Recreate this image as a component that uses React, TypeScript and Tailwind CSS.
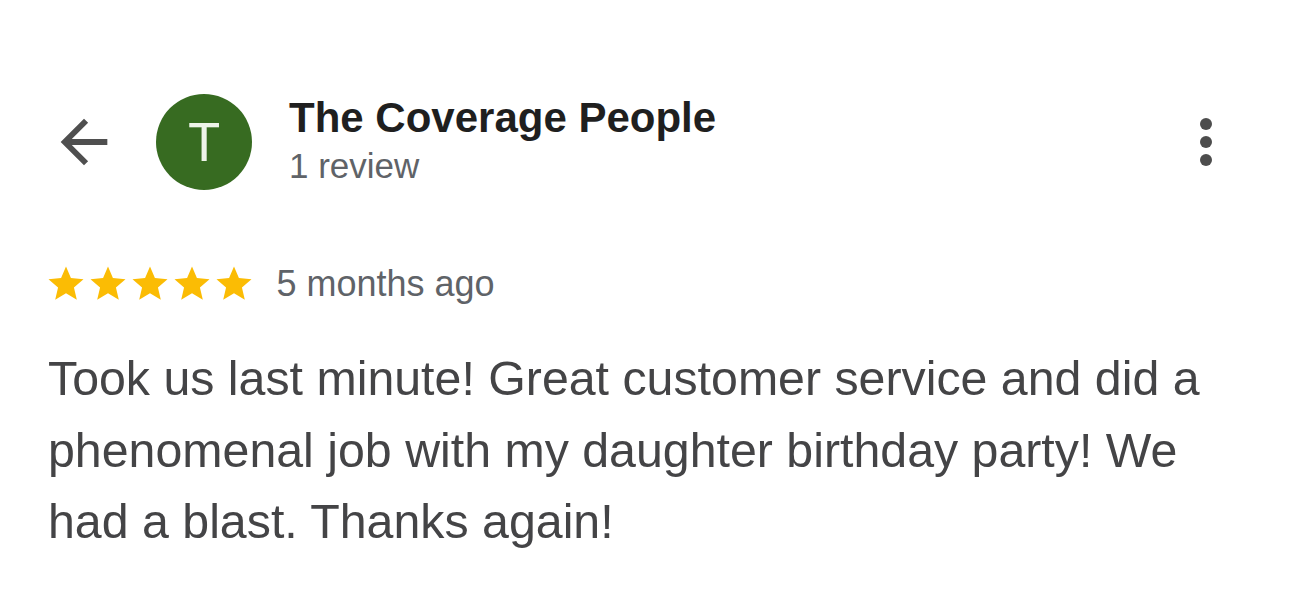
import React from 'react';

function Star() {
  return (
    <svg viewBox="0 0 24 24" className="h-[42px] w-[42px] fill-[#fbbc04]">
      <path d="M12 17.27L18.18 21l-1.64-7.03L22 9.24l-7.19-.61L12 2 9.19 8.63 2 9.24l5.46 4.73L5.82 21z" />
    </svg>
  );
}

export default function App() {
  return (
    <div className="min-h-[614px] w-full bg-white px-12 pt-[94px] font-['Liberation_Sans',Arial,sans-serif]">
      {/* Header */}
      <div className="flex items-center">
        <svg viewBox="0 0 24 24" className="ml-px h-[70px] w-[70px] fill-[#4f4f4f]">
          <path d="M20 11H7.83l5.59-5.59L12 4l-8 8 8 8 1.41-1.41L7.83 13H20v-2z" />
        </svg>
        <div className="ml-[37px] flex h-24 w-24 items-center justify-center rounded-full bg-[#376b21] font-['Roboto',sans-serif] text-[54px] font-normal text-[#eef4ea]">
          T
        </div>
        <div className="ml-[37px] flex flex-col">
          <p className="text-[42px] font-bold leading-[48px] text-[#1f1f1f]">The Coverage People</p>
          <p className="text-[35px] leading-[48px] text-[#5f6368]">1 review</p>
        </div>
        <svg viewBox="0 0 24 24" className="ml-auto h-[72px] w-[72px] fill-[#4d4d4d]">
          <circle cx="12" cy="6" r="2" />
          <circle cx="12" cy="12" r="2" />
          <circle cx="12" cy="18" r="2" />
        </svg>
      </div>

      {/* Rating */}
      <div className="mt-[73px] flex h-[42px] items-center">
        <div className="-ml-[3.5px] flex">
          <Star />
          <Star />
          <Star />
          <Star />
          <Star />
        </div>
        <span className="ml-[22px] text-[36px] leading-[42px] text-[#5f6368]">5 months ago</span>
      </div>

      {/* Body */}
      <p className="mt-[38px] text-[48.3px] leading-[71.5px] text-[#444446]">
        Took us last minute! Great customer service and did a phenomenal job with my daughter birthday party! We
        had a blast. Thanks again!
      </p>
    </div>
  );
}
